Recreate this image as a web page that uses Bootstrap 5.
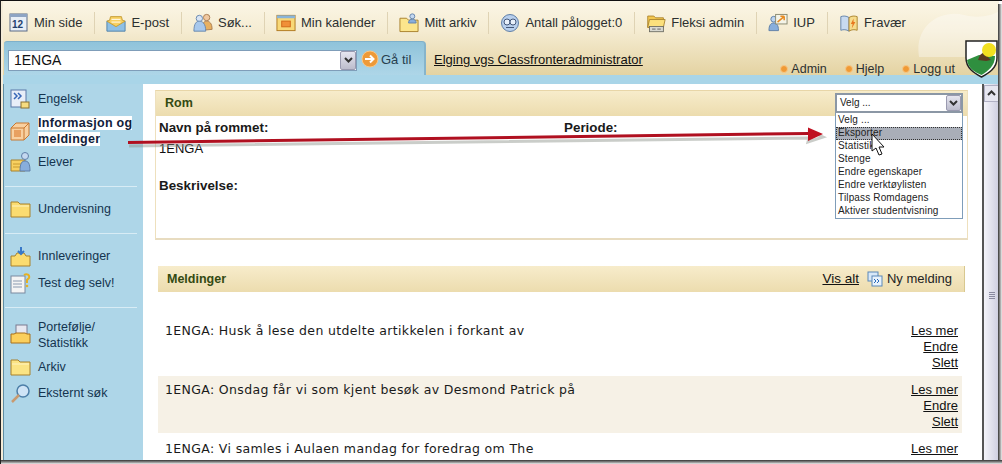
<!DOCTYPE html>
<html lang="en">
  <head>
    <meta charset="UTF-8" />
    <title>Rom</title>
    <link rel="stylesheet" href="https://cdn.jsdelivr.net/npm/bootstrap@5.3.3/dist/css/bootstrap.min.css" />
    <style>
      html, body { height: 100%; overflow: hidden; }
      body { background: #fff; font-family: "Liberation Sans", Arial, sans-serif; color: #1c2530; }
      a { color: #111; }
      .shot { width: 1002px; height: 464px; position: relative; overflow: hidden; border-top: 1px solid #111; border-left: 1px solid #222; }
      .shot-in { width: 998px; height: 460px; background: #fff; overflow: hidden; border-left: 2px solid #f4ecd8; }
      .edge-right { position: absolute; right: 0; top: 3px; bottom: 0; width: 4px; background: linear-gradient(90deg, #333, #aaa 60%, #eee); }
      .edge-bottom { position: absolute; left: 0; right: 0; bottom: 0; height: 4px; background: linear-gradient(180deg, #333, #999 60%, #eee); }
      .topzone { height: 74px; background: linear-gradient(180deg, #fbf6e6 0, #f5ecd2 40%, #e4d3a2 100%); position: relative; }
      .tool-bar { height: 39px; padding: 4px 0 0 6px; font-size: 13px; color: #2c3030; }
      .tool-item { height: 22px; padding-right: 12px; margin-right: 11px; gap: 5px; border-right: 1px solid #dfd3b4; white-space: nowrap; }
      .tool-item svg { width: 20px; flex: none; }
      .tool-item:last-child { border: 0; }
      .room-row { height: 35px; }
      .room-tab { width: 422px; height: 34px; margin: 1px 0 0 1px; background: linear-gradient(180deg, #8fc3da, #aed6e8); border-top: 1px solid #7fb0c9; border-right: 2px solid #86b4cb; border-radius: 3px 4px 0 0; padding: 8px 0 0 4px; font-size: 14px; }
      .room-sel { width: 349px; height: 21px; background: #fff; border: 1px solid #7f9db9; padding-left: 5px; line-height: 19px; color: #111; }
      .sel-btn { width: 16px; background: linear-gradient(180deg, #e6e6f0, #bcbccc); border: 1px solid #9a9ab0; border-radius: 2px; }
      .go-txt { font-size: 13px; color: #27404f; margin-left: 2px; }
      .crumb { font-size: 13px; margin: 10px 0 0 8px; text-decoration: underline; color: #111; }
      .top-links { position: absolute; right: 44px; bottom: -1px; font-size: 12.5px; line-height: 14px; gap: 18px; color: #2c3030; }
      .dot { display: inline-block; width: 8px; height: 8px; border-radius: 50%; background: #f09a35; border: 1px solid #f7c888; margin-right: 3px; }
      .crest { position: absolute; right: 1px; top: 39px; z-index: 2; }
      .top-shade { position: absolute; right: 0; top: 6px; opacity: .35; }
      .blue-band { height: 9px; background: #a9d5e8; }
      .page-body { height: 377px; }
      .side-nav { width: 140px; background: #aed6e8; border-left: 1px solid #5f8da3; font-size: 12.5px; color: #14344f; padding: 3px 0 0 6px; flex: none; }
      .nav-it { gap: 7px; height: 24px; line-height: 16px; }
      .nav-it svg { flex: none; }
      .nav-two { height: 32px; }
      .nav-on { font-weight: 700; color: #10203a; letter-spacing: .3px; margin: 4px 0 3px; }
      .nav-on span { background: #fff; box-decoration-break: clone; -webkit-box-decoration-break: clone; }
      .nav-gap3 { margin-top: 3px; }
      .nav-gap4 { margin-top: 4px; }
      .nav-gap2 { margin-top: 2px; }
      .side-rule { border-top: 1px solid #d8ecf5; margin: 12px 6px 10px -5px; }
      .side-rule.wide { margin-bottom: 11px; }
      .main-col { width: 839px; padding: 6px 14px 0 12px; flex: none; }
      .room-card { height: 150px; border: 1px solid #eee0bd; border-top-color: #e8d6a8; border-bottom: 2px solid #e8dcc0; }
      .band { height: 25px; background: linear-gradient(180deg, #f7eccb, #ecdcae); color: #344a12; font-weight: 700; font-size: 12.5px; padding-left: 9px; }
      .room-cols { padding: 4px 3px; font-size: 13px; line-height: 16px; color: #111; }
      .room-cols b { font-size: 13.4px; color: #1a1a1a; }
      .col-a { width: 405px; }
      .room-val { margin-top: 5px; }
      .room-desc { margin-top: 21px; }
      .msg-wrap { margin: 26px 3px 0 3px; }
      .msg-head { height: 26px; border-right: 1px solid #d8c88f; padding-right: 12px; }
      .msg-head .right { font-size: 13px; gap: 8px; color: #222; }
      .msg-head a { font-size: 13.5px; }
      .msg-row { padding: 6px 4px 0 7px; height: 57px; margin: 0 3px 2px 0; font-family: "DejaVu Sans", Verdana, sans-serif; font-size: 12.5px; letter-spacing: .35px; line-height: 16px; color: #1a1a1a; }
      .msg-row.first { margin-top: 25px; }
      .msg-row.alt { background: #f6f1e6; }
      .msg-act { font-family: "Liberation Sans", Arial, sans-serif; font-size: 13px; letter-spacing: 0; line-height: 16px; text-align: right; }
      .msg-act a { display: block; }
      .scroll-col { width: 17px; border-left: 2px solid #555; background: linear-gradient(90deg, #f4f4fa, #cdcde0); flex: none; }
      .scroll-up { height: 17px; margin-top: 1px; border: 1px solid #b0b0c4; background: #e6e6f0; }
      .scroll-grip { width: 6px; height: 7px; margin: 190px auto 0; background: repeating-linear-gradient(180deg, #8a8aa0 0 1px, transparent 1px 2px); }
      .velg { position: absolute; left: 834px; top: 92px; width: 128px; font-size: 10px; background: #fff; z-index: 3; color: #222; }
      .velg-head { height: 20px; border: 2px solid #8b97a5; padding-left: 3px; line-height: 15px; }
      .velg-head .sel-btn { width: 15px; }
      .velg-list { border: 1px solid #7f9db9; border-top: 0; padding-top: 1px; }
      .velg-list div { height: 13px; line-height: 12px; padding-left: 2px; white-space: nowrap; letter-spacing: .15px; }
      .velg-list .hot { background: #a9aeb8; outline: 1px dotted #333; outline-offset: -1px; }
      .anno { position: absolute; left: 0; top: 0; z-index: 4; pointer-events: none; }
    </style>
  </head>
  <body>
    <div class="shot">
      <div class="shot-in">
        <div class="topzone">
          <svg class="top-shade" width="90" height="50" viewBox="0 0 90 50"><path d="M10 50C5 20 30 2 55 8c15 4 30 0 35-4v46z" fill="#fff"/></svg>
          <div class="tool-bar d-flex align-items-center">
            <div class="tool-item d-flex align-items-center">
              <svg width="20" height="20" viewBox="0 0 20 20"><rect x="1" y="1" width="17" height="17" fill="#e8eef6" stroke="#5a6a86"/><rect x="1" y="1" width="17" height="3" fill="#8ea4c4"/><text x="3" y="15" font-size="10" font-weight="700" font-family="Liberation Sans" fill="#24406e">12</text></svg>
              Min side
            </div>
            <div class="tool-item d-flex align-items-center">
              <svg width="22" height="20" viewBox="0 0 22 20"><path d="M1 8h20v11H1z" fill="#8fc0e4" stroke="#4d7fa8"/><path d="M5 3h12l1 4 3 1-10 6L1 8l3-1z" fill="#f8d060" stroke="#c49a30"/><path d="M6 6h10M6 9h10" stroke="#fff"/></svg>
              E-post
            </div>
            <div class="tool-item d-flex align-items-center">
              <svg width="22" height="22" viewBox="0 0 22 22"><circle cx="15" cy="5" r="3.5" fill="#f0c8a0" stroke="#a87a50"/><path d="M10 19c0-8 2-10 5-10s6 2 6 9z" fill="#e8b060" stroke="#a87a50"/><circle cx="7" cy="6" r="3.5" fill="#d8e4f4" stroke="#6484ac"/><path d="M1 20c0-9 3-11 6-11s7 2 7 11z" fill="#a8c8ec" stroke="#6484ac"/></svg>
              Søk...
            </div>
            <div class="tool-item d-flex align-items-center">
              <svg width="21" height="20" viewBox="0 0 21 20"><rect x="1" y="2" width="19" height="16" fill="#f8d878" stroke="#b07a20"/><rect x="1" y="2" width="19" height="3" fill="#8ab4d8"/><rect x="6" y="8" width="9" height="6" fill="#f09038" stroke="#d06818"/></svg>
              Min kalender
            </div>
            <div class="tool-item d-flex align-items-center">
              <svg width="21" height="22" viewBox="0 0 21 22"><path d="M1 6h7l2 2h10v12H1z" fill="#fbe58c" stroke="#a8812c"/><circle cx="14" cy="4" r="2.6" fill="#c4d8f0" stroke="#6484ac"/><path d="M10 11c0-3 2-4 4-4s4 1 4 4z" fill="#88aedc" stroke="#6484ac"/></svg>
              Mitt arkiv
            </div>
            <div class="tool-item d-flex align-items-center">
              <svg width="20" height="20" viewBox="0 0 20 20"><circle cx="10" cy="10" r="8.5" fill="#b8cfec" stroke="#5f7fa8"/><circle cx="7" cy="9" r="3" fill="#e8f0fa" stroke="#44587a"/><circle cx="13" cy="9" r="3" fill="#e8f0fa" stroke="#44587a"/><path d="M6 14.500h8" stroke="#44587a"/></svg>
              Antall pålogget:0
            </div>
            <div class="tool-item d-flex align-items-center">
              <svg width="23" height="22" viewBox="0 0 23 22"><path d="M2 3h7l2 2h9v11H2z" fill="#f4c850" stroke="#a8812c"/><path d="M4 7h18l-2 9H2z" fill="#fbe07c" stroke="#a8812c"/><rect x="4" y="15" width="16" height="6" fill="#d8d8d0" stroke="#6a6a60"/><path d="M7 18h4M13 18h4" stroke="#555"/></svg>
              Fleksi admin
            </div>
            <div class="tool-item d-flex align-items-center">
              <svg width="21" height="20" viewBox="0 0 21 20"><circle cx="6" cy="6" r="3" fill="#bcd4f0" stroke="#5f7fa8"/><path d="M1 18c0-6 2-8 5-8s5 2 5 8z" fill="#88aedc" stroke="#5f7fa8"/><rect x="8" y="1" width="12" height="10" fill="#f4f4e8" stroke="#8a8a70"/><path d="M10 9l7-6m0 0h-4m4 0v4" stroke="#e88a20" stroke-width="1.600" fill="none"/></svg>
              IUP
            </div>
            <div class="tool-item d-flex align-items-center">
              <svg width="22" height="20" viewBox="0 0 22 20"><path d="M2 3c3-1 6-1 9 1v15c-3-2-6-2-9-1z" fill="#c8daf0" stroke="#5f7fa8"/><path d="M20 3c-3-1-6-1-9 1v15c3-2 6-2 9-1z" fill="#f6dc8c" stroke="#a8812c"/><path d="M16 5l-3 6h2l-1 5 4-7h-2z" fill="#e87820"/></svg>
              Fravær
            </div>
          </div>
          <div class="room-row d-flex align-items-start">
            <div class="room-tab d-flex align-items-start">
              <div class="room-sel d-flex justify-content-between">
                1ENGA
                <span class="sel-btn d-flex align-items-center justify-content-center"><svg width="9" height="7" viewBox="0 0 9 7"><path d="M1 1l3.500 3.500L8 1" fill="none" stroke="#333" stroke-width="2"/></svg></span>
              </div>
              <svg class="ms-1" width="18" height="18" viewBox="0 0 18 18"><circle cx="9" cy="9" r="8" fill="#ee9a38" stroke="#f8c888"/><path d="M4 9h8m-3-3.500L12.500 9 9 12.500" fill="none" stroke="#fff" stroke-width="2"/></svg>
              <span class="go-txt">Gå til</span>
            </div>
            <a class="crumb" href="#">Elging vgs Classfronteradministrator</a>
          </div>
          <div class="top-links d-flex">
            <span><i class="dot"></i>Admin</span>
            <span><i class="dot"></i>Hjelp</span>
            <span><i class="dot"></i>Logg ut</span>
          </div>
          <svg class="crest" width="33" height="38" viewBox="0 0 33 38"><path d="M1 1h31v17c0 10-8 15-15.500 19C9 33 1 28 1 18z" fill="#fff" stroke="#222" stroke-width="1.500"/><path d="M2 20l12-5 16 1c0 10-7 15-13.500 19C9 32 3 28 2 20z" fill="#2f8f3f"/><path d="M13 20l2-5 4-3 4 5 3 3-5 1z" fill="#5a3a20"/><circle cx="24" cy="10" r="7" fill="#f2e020"/></svg>
        </div>
        <div class="blue-band"></div>
        <div class="page-body d-flex">
          <div class="side-nav">
            <div class="nav-it d-flex align-items-center">
              <svg width="21" height="21" viewBox="0 0 21 21"><rect x="1" y="1" width="15" height="17" fill="#e8eef8" stroke="#5a78a8"/><path d="M4 4l3 3-3 3M8 4l3 3-3 3" fill="none" stroke="#3868b8" stroke-width="1.500"/><rect x="11" y="13" width="8" height="6" fill="#f6dc80" stroke="#8a7030"/></svg>
              <span>Engelsk</span>
            </div>
            <div class="nav-it nav-two nav-on d-flex align-items-center">
              <svg width="21" height="20" viewBox="0 0 21 20"><path d="M1 7h13v12H1zM1 7l5-5h13v12l-5 5M14 7l5-5" fill="#f8d0a0" stroke="#c87830"/><rect x="4" y="9" width="7" height="7" fill="#e8a060"/></svg>
              <div><span>Informasjon og meldinger</span></div>
            </div>
            <div class="nav-it d-flex align-items-center">
              <svg width="21" height="22" viewBox="0 0 21 22"><path d="M1 9h14v11H1z" fill="#f8d060" stroke="#a8812c"/><path d="M3 13h10M3 16h10" stroke="#c89a30"/><circle cx="15" cy="5" r="3.500" fill="#c4d8f0" stroke="#5f7fa8"/><path d="M10 20c0-8 2-10 5-10s5 2 5 10z" fill="#88aedc" stroke="#5f7fa8"/></svg>
              <span>Elever</span>
            </div>
            <div class="side-rule"></div>
            <div class="nav-it d-flex align-items-center">
              <svg width="21" height="17" viewBox="0 0 21 17"><path d="M1 1h7l2 2h10v13H1z" fill="#fbdc70" stroke="#a8812c"/><path d="M2 5h17" stroke="#fff3c0"/></svg>
              <span>Undervisning</span>
            </div>
            <div class="side-rule"></div>
            <div class="nav-it d-flex align-items-center">
              <svg width="21" height="21" viewBox="0 0 21 21"><path d="M1 10h4l2-3h7l2 3h4v10H1z" fill="#fbdc70" stroke="#a8812c"/><path d="M11 1v7m-3-3l3 3 3-3" fill="none" stroke="#3878c8" stroke-width="2"/></svg>
              <span>Innleveringer</span>
            </div>
            <div class="nav-it nav-gap3 d-flex align-items-center">
              <svg width="21" height="21" viewBox="0 0 21 21"><rect x="1" y="3" width="14" height="17" fill="#f4f4f4" stroke="#7a8aa0"/><path d="M3 8h9M3 11h9M3 14h9" stroke="#8a9ab0"/><path d="M14 2c3-2 6 0 5 3l-2 2v3" fill="none" stroke="#e8b020" stroke-width="2"/><circle cx="17" cy="13" r="1.300" fill="#e8b020"/></svg>
              <span>Test deg selv!</span>
            </div>
            <div class="side-rule wide"></div>
            <div class="nav-it nav-two d-flex align-items-center">
              <svg width="21" height="24" viewBox="0 0 21 24"><rect x="6" y="2" width="11" height="10" fill="#e8e8f0" stroke="#7a7a90"/><path d="M1 11h3l2-1h9l2 1h3v9H1z" fill="#fbcf5c" stroke="#a8701c"/></svg>
              <span>Portefølje/<br />Statistikk</span>
            </div>
            <div class="nav-it nav-gap4 d-flex align-items-center">
              <svg width="21" height="17" viewBox="0 0 21 17"><path d="M1 1h7l2 2h10v13H1z" fill="#fbe484" stroke="#a8812c"/><path d="M2 5h17" stroke="#fff3c0"/></svg>
              <span>Arkiv</span>
            </div>
            <div class="nav-it nav-gap2 d-flex align-items-center">
              <svg width="21" height="21" viewBox="0 0 21 21"><circle cx="13" cy="8" r="6" fill="#cfe4f6" stroke="#4d7fa8" stroke-width="1.500"/><path d="M9 12l-7 7" stroke="#c89a70" stroke-width="2.500"/></svg>
              <span>Eksternt søk</span>
            </div>
          </div>
          <div class="main-col">
            <div class="room-card">
              <div class="band d-flex align-items-center">Rom</div>
              <div class="room-cols d-flex">
                <div class="col-a">
                  <b class="d-block">Navn på rommet:</b>
                  <div class="room-val">1ENGA</div>
                  <b class="d-block room-desc">Beskrivelse:</b>
                </div>
                <div><b>Periode:</b></div>
              </div>
            </div>
            <div class="msg-wrap">
              <div class="band msg-head d-flex align-items-center justify-content-between">
                <span>Meldinger</span>
                <span class="right d-flex align-items-center fw-normal">
                  <a href="#">Vis alt</a>
                  <span class="d-flex align-items-center gap-1">
                    <svg width="16" height="16" viewBox="0 0 16 16"><rect x="1" y="1" width="10" height="9" fill="#d8e8f8" stroke="#5a88b8"/><rect x="5" y="5" width="10" height="10" fill="#e8f2fc" stroke="#5a88b8"/><path d="M7 8l2 2-2 2M10 8l2 2-2 2" fill="none" stroke="#2868b8"/></svg>
                    Ny melding
                  </span>
                </span>
              </div>
              <div class="msg-row first d-flex justify-content-between align-items-start">
                <span>1ENGA: Husk å lese den utdelte artikkelen i forkant av</span>
                <div class="msg-act"><a href="#">Les mer</a><a href="#">Endre</a><a href="#">Slett</a></div>
              </div>
              <div class="msg-row alt d-flex justify-content-between align-items-start">
                <span>1ENGA: Onsdag får vi som kjent besøk av Desmond Patrick på</span>
                <div class="msg-act"><a href="#">Les mer</a><a href="#">Endre</a><a href="#">Slett</a></div>
              </div>
              <div class="msg-row d-flex justify-content-between align-items-start">
                <span>1ENGA: Vi samles i Aulaen mandag for foredrag om The</span>
                <div class="msg-act"><a href="#">Les mer</a><a href="#">Endre</a><a href="#">Slett</a></div>
              </div>
            </div>
          </div>
          <div class="scroll-col">
            <div class="scroll-up d-flex align-items-center justify-content-center"><svg width="9" height="7" viewBox="0 0 9 7"><path d="M1 5l3.500-3.500L8 5" fill="none" stroke="#333" stroke-width="2"/></svg></div>
            <div class="scroll-grip"></div>
          </div>
        </div>
      </div>
      <div class="velg">
        <div class="velg-head d-flex justify-content-between">Velg ...<span class="sel-btn d-flex align-items-center justify-content-center"><svg width="9" height="7" viewBox="0 0 9 7"><path d="M1 1l3.500 3.500L8 1" fill="none" stroke="#333" stroke-width="2"/></svg></span></div>
        <div class="velg-list">
          <div>Velg ...</div>
          <div class="hot">Eksporter</div>
          <div>Statistikk</div>
          <div>Stenge</div>
          <div>Endre egenskaper</div>
          <div>Endre verktøylisten</div>
          <div>Tilpass Romdagens</div>
          <div>Aktiver studentvisning</div>
        </div>
      </div>
      <svg class="anno" width="1002" height="464" viewBox="0 0 1002 464">
        <path d="M128 145L808 137l-1 4 15-5-15-7" fill="none" stroke="#8a9088" stroke-width="3" opacity=".45"/>
        <path d="M127 141.500L808 132.500" stroke="#b01020" stroke-width="3"/>
        <path d="M807 126.500L822 133 807 140z" fill="#c01020"/>
        <path d="M871 133v17l4-3 3 7 3-1-3-7h5z" fill="#fff" stroke="#111"/>
      </svg>
      <div class="edge-right"></div>
      <div class="edge-bottom"></div>
    </div>
  </body>
</html>
